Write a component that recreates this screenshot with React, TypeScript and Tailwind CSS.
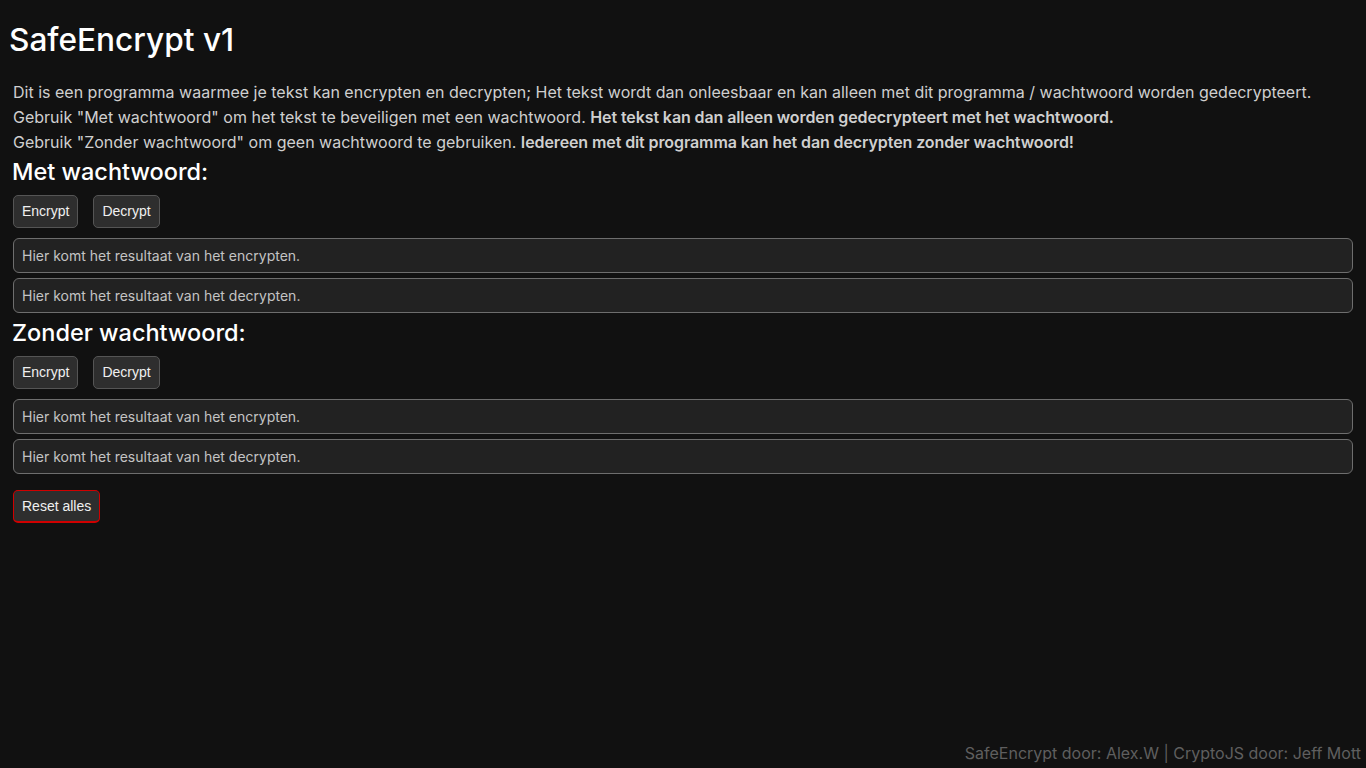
const body = "font-['Inter',sans-serif]";

function Btn({ label, danger }: { label: string; danger?: boolean }) {
  return (
    <button
      className={`h-[33px] px-2 rounded-[5px] bg-[#2e2e2e] text-[#f0f0f0] text-[14px] font-['Liberation_Sans',Arial,sans-serif] border ${
        danger ? "border-[#d00000] border-b-2" : "border-[#555]"
      }`}
    >
      {label}
    </button>
  );
}

function Result({ text }: { text: string }) {
  return (
    <div className="h-[35px] flex items-center px-2 rounded-[6px] bg-[#222] border border-[#6e6e6e] text-[14px] text-[#c4c4c4]">
      {text}
    </div>
  );
}

function Section({ title }: { title: string }) {
  return (
    <section className="flex flex-col">
      <h2 className="text-[23.5px] font-[550] text-white leading-[30px] -ml-px">{title}</h2>
      <div className="flex gap-[15px] mt-[8px]">
        <Btn label="Encrypt" />
        <Btn label="Decrypt" />
      </div>
      <div className="flex flex-col gap-[5px] mt-[10px]">
        <Result text="Hier komt het resultaat van het encrypten." />
        <Result text="Hier komt het resultaat van het decrypten." />
      </div>
    </section>
  );
}

export default function App() {
  return (
    <div className={`min-h-screen bg-[#111111] flex flex-col ${body}`}>
      <div className="px-[13px]">
        <h1 className="text-[31.6px] font-medium text-white leading-[40px] pt-[20px] -ml-[4px]">
          SafeEncrypt v1
        </h1>
        <p className="mt-[20px] text-[16px] leading-[25px] text-[#cfcfcf]">
          Dit is een programma waarmee je tekst kan encrypten en decrypten; Het tekst wordt dan onleesbaar en kan alleen met dit programma / wachtwoord worden gedecrypteert.
          <br />
          Gebruik "Met wachtwoord" om het tekst te beveiligen met een wachtwoord.{" "}
          <b className="font-semibold tracking-[-0.1px]">Het tekst kan dan alleen worden gedecrypteert met het wachtwoord.</b>
          <br />
          Gebruik "Zonder wachtwoord" om geen wachtwoord te gebruiken.{" "}
          <b className="font-semibold tracking-[-0.1px]">Iedereen met dit programma kan het dan decrypten zonder wachtwoord!</b>
        </p>
        <div className="flex flex-col gap-[5px] mt-[2px]">
          <Section title="Met wachtwoord:" />
          <Section title="Zonder wachtwoord:" />
        </div>
        <div className="mt-[16px]">
          <Btn label="Reset alles" danger />
        </div>
      </div>
      <footer className="mt-auto self-end pr-[5px] pb-[3px] text-[16px] text-[#5f5f5f]">
        SafeEncrypt door: Alex.W | CryptoJS door: Jeff Mott
      </footer>
    </div>
  );
}
